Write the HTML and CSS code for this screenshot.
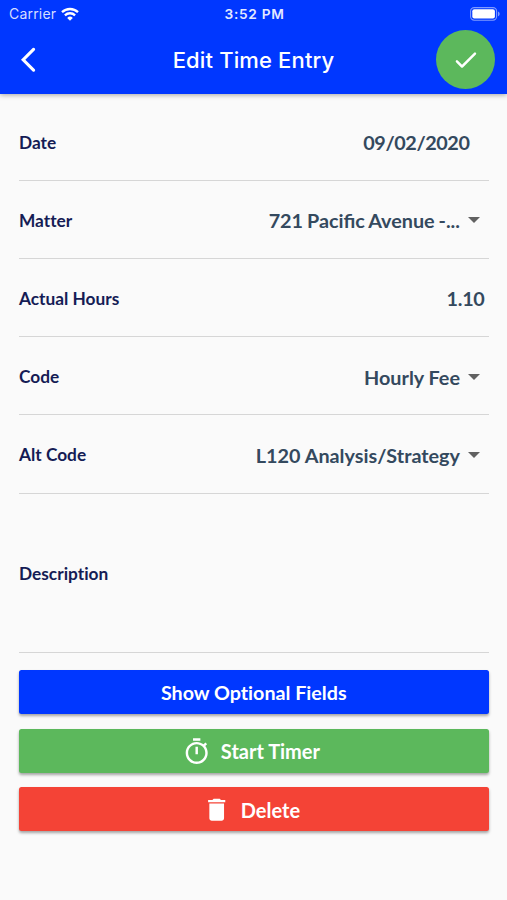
FILE: index.html
```html
<!DOCTYPE html>
<html lang="en">
<head>
    <meta charset="UTF-8">
    <meta name="viewport" content="width=device-width, initial-scale=1.0">
    <title>Edit Time Entry</title>
    <link rel="stylesheet" href="styles.css">
</head>
<body>
    <header class="header">
        <div class="status-bar">
            <div class="carrier">
                <span>Carrier</span>
                <svg class="wifi" viewBox="0 0 18 14">
                    <path d="M1 5.2a11.6 11.6 0 0 1 16 0" />
                    <path d="M3.9 8.3a7.4 7.4 0 0 1 10.2 0" />
                    <path class="wifi-dot" d="M9 13.8l-2.8-2.9a4 4 0 0 1 5.6 0z" />
                </svg>
            </div>
            <span class="time">3:52 PM</span>
            <div class="battery-wrap">
                <svg class="battery" viewBox="0 0 30 14">
                    <rect class="battery-case" x="0.6" y="0.6" width="26" height="12.6" rx="3.6" />
                    <rect class="battery-level" x="2.3" y="2.3" width="22.6" height="9.2" rx="2" />
                    <path class="battery-tip" d="M28 4.6c2.2 .9 2.2 3.7 0 4.6z" />
                </svg>
            </div>
        </div>
        <div class="title-bar">
            <button class="back" aria-label="Back">
                <svg viewBox="0 0 24 24"><path d="M11.3 4.2a1.25 1.25 0 0 0-1.75-1.75L0 12l9.55 9.55a1.25 1.25 0 0 0 1.75-1.75L3.54 12z" /></svg>
            </button>
            <h1>Edit Time Entry</h1>
            <button class="save" aria-label="Save">
                <svg viewBox="0 0 24 24"><path d="M9 16.17L5.53 12.7a.996.996 0 1 0-1.41 1.41l4.18 4.18c.39.39 1.02.39 1.41 0L20.29 7.71a.996.996 0 1 0-1.41-1.41z" /></svg>
            </button>
        </div>
    </header>

    <main class="form">
        <div class="row">
            <span class="label">Date</span>
            <span class="value date">09/02/2020</span>
        </div>
        <div class="row">
            <span class="label">Matter</span>
            <span class="value select matter">721 Pacific Avenue -...</span>
        </div>
        <div class="row">
            <span class="label">Actual Hours</span>
            <span class="value hours">1.10</span>
        </div>
        <div class="row">
            <span class="label">Code</span>
            <span class="value select">Hourly Fee</span>
        </div>
        <div class="row">
            <span class="label">Alt Code</span>
            <span class="value select">L120 Analysis/Strategy</span>
        </div>
        <div class="row description">
            <span class="label">Description</span>
        </div>

        <div class="actions">
            <button class="btn blue">Show Optional Fields</button>
            <button class="btn btn-icon green">
                <svg viewBox="0 0 24 24"><path d="M15 1H9v2h6V1zm-4 13h2V8h-2v6zm8.03-6.61l1.42-1.42c-.43-.51-.9-.99-1.41-1.41l-1.42 1.42C16.07 4.74 14.12 4 12 4c-4.97 0-9 4.03-9 9s4.02 9 9 9 9-4.03 9-9c0-2.12-.74-4.07-1.97-5.61zM12 20c-3.87 0-7-3.13-7-7s3.13-7 7-7 7 3.13 7 7-3.13 7-7 7z" /></svg>
                Start Timer
            </button>
            <button class="btn btn-icon red">
                <svg viewBox="0 0 24 24"><path d="M6 19c0 1.1.9 2 2 2h8c1.1 0 2-.9 2-2V7H6v12zM19 4h-3.500l-1-1h-5l-1 1H5v2h14V4z" /></svg>
                Delete
            </button>
        </div>
    </main>
</body>
</html>
```

FILE: styles.css
```css
* {
    box-sizing: border-box;
}
body {
    margin: 0;
    min-height: 100vh;
    background-color: #fafafa;
    font-family: Lato, sans-serif;
    font-variant-ligatures: no-common-ligatures;
}
button {
    border: none;
    padding: 0;
    font-family: inherit;
    cursor: pointer;
}
svg {
    display: block;
    fill: currentColor;
}

/* Header */
.header {
    height: 93.5px;
    background-color: #0037ff;
    color: #fff;
    font-family: Inter, sans-serif;
    box-shadow: 0 1px 5px rgba(0, 0, 0, 0.35);
}
.status-bar {
    display: grid;
    grid-template-columns: 1fr auto 1fr;
    align-items: center;
    height: 27px;
    padding: 0 7px 0 9px;
    font-size: 14px;
}
.carrier {
    display: flex;
    align-items: center;
    gap: 5px;
    color: #d5deff;
    letter-spacing: 0.2px;
}
.wifi {
    width: 18px;
    height: 14px;
    fill: none;
    stroke: #fff;
    stroke-width: 2.3;
}
.wifi .wifi-dot {
    fill: #fff;
    stroke: none;
}
.time {
    font-weight: 600;
    font-size: 13.7px;
    letter-spacing: 0.7px;
    color: #e3e9ff;
}
.battery-wrap {
    display: flex;
    justify-content: flex-end;
}
.battery {
    width: 30px;
    height: 14px;
}
.battery-case {
    fill: none;
    stroke: #7f9bff;
    stroke-width: 1.1;
}
.battery-level {
    fill: #fff;
}
.battery-tip {
    fill: #7f9bff;
}
.title-bar {
    display: grid;
    grid-template-columns: 1fr auto 1fr;
    align-items: center;
    height: 65px;
    padding: 0 12px;
}
.title-bar h1 {
    margin: 0;
    font-size: 22px;
    font-weight: 500;
    letter-spacing: 0.15px;
}
.title-bar svg {
    width: 29.4px;
    height: 29.4px;
}
.back {
    justify-self: start;
    margin-left: 8.5px;
    background: none;
    color: #fff;
}
.save {
    display: flex;
    align-items: center;
    justify-content: center;
    justify-self: end;
    width: 59px;
    height: 59px;
    border-radius: 50%;
    background-color: #5cb85c;
    color: #fff;
}

/* Form */
.form {
    padding: 9.3px 18.5px 0 19px;
}
.row {
    display: flex;
    align-items: center;
    justify-content: space-between;
    height: 78.15px;
    padding-top: 1.6px;
    border-bottom: 1px solid #d6d6d6;
}
.label {
    font-size: 17.3px;
    font-weight: 700;
    color: #151c55;
}
.value {
    font-size: 19.8px;
    font-weight: 700;
    color: #34495e;
}
.date {
    padding-right: 19px;
    letter-spacing: -0.4px;
}
.hours {
    padding-right: 4px;
    letter-spacing: -0.3px;
}
.select {
    display: flex;
    align-items: center;
    gap: 8px;
    padding-right: 8.5px;
}
.select::after {
    content: "";
    border: 6.4px solid transparent;
    border-top-color: #616161;
    border-bottom: none;
}
.matter {
    font-variant-ligatures: normal;
    word-spacing: -0.9px;
}
.description {
    height: 159.5px;
}

/* Buttons */
.actions {
    display: flex;
    flex-direction: column;
    gap: 14.5px;
    padding-top: 17px;
}
.btn {
    display: flex;
    align-items: center;
    justify-content: center;
    gap: 9px;
    height: 44px;
    padding-top: 1.5px;
    border-radius: 2.5px;
    color: #fff;
    font-size: 19.7px;
    font-weight: 700;
    font-variant-ligatures: inherit;
    box-shadow: 0 2px 3px rgba(0, 0, 0, 0.35);
}
.btn-icon {
    padding-right: 5px;
    font-size: 20px;
}
.btn svg {
    width: 29.4px;
    height: 29.4px;
}
.blue {
    background-color: #0037ff;
}
.green {
    background-color: #5cb85c;
}
.red {
    background-color: #f44336;
}
```
